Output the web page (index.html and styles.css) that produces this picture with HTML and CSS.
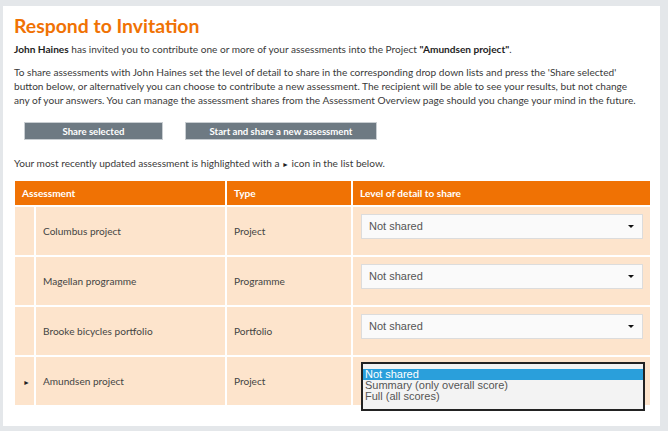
FILE: index.html
```html
<!DOCTYPE html>
<html lang="en">
  <head>
    <meta charset="UTF-8" />
    <title>Respond to Invitation</title>
    <link rel="stylesheet" href="styles.css">
  </head>
  <body>
    <div class="panel">
      <h1 class="title">Respond to Invitation</h1>
      <p class="intro">
        <b>John Haines</b> has invited you to contribute one or more of your assessments into the Project <b>"Amundsen project"</b>.
      </p>
      <p class="intro intro-long">
        To share assessments with John Haines set the level of detail to share in the corresponding drop down lists and press the 'Share selected'<br>
        button below, or alternatively you can choose to contribute a new assessment. The recipient will be able to see your results, but not change<br>
        any of your answers. You can manage the assessment shares from the Assessment Overview page should you change your mind in the future.
      </p>

      <div class="actions">
        <button class="btn btn-share">Share selected</button>
        <button class="btn btn-new">Start and share a new assessment</button>
      </div>

      <p class="intro">Your most recently updated assessment is highlighted with a <span class="mark">&#9658;</span> icon in the list below.</p>

      <table class="shares">
        <thead>
          <tr>
            <th colspan="2">Assessment</th>
            <th class="col-type">Type</th>
            <th class="col-level">Level of detail to share</th>
          </tr>
        </thead>
        <tbody>
          <tr>
            <td class="col-mark"></td>
            <td class="col-name">Columbus project</td>
            <td>Project</td>
            <td class="col-level">
              <div class="select">Not shared<span class="caret"></span></div>
            </td>
          </tr>
          <tr>
            <td class="col-mark"></td>
            <td class="col-name">Magellan programme</td>
            <td>Programme</td>
            <td class="col-level">
              <div class="select">Not shared<span class="caret"></span></div>
            </td>
          </tr>
          <tr>
            <td class="col-mark"></td>
            <td class="col-name">Brooke bicycles portfolio</td>
            <td>Portfolio</td>
            <td class="col-level">
              <div class="select">Not shared<span class="caret"></span></div>
            </td>
          </tr>
          <tr>
            <td class="col-mark"><span class="mark">&#9658;</span></td>
            <td class="col-name">Amundsen project</td>
            <td>Project</td>
            <td class="col-level">
              <div class="select">Not shared<span class="caret"></span></div>
              <ul class="dropdown">
                <li class="selected">Not shared</li>
                <li>Summary (only overall score)</li>
                <li>Full (all scores)</li>
              </ul>
            </td>
          </tr>
        </tbody>
      </table>
    </div>
  </body>
</html>
```

FILE: styles.css
```css
/* Global Styles */
* {
  margin: 0;
  padding: 0;
  box-sizing: border-box;
}

body {
  background-color: #e4e7ea;
  font-family: "Lato", sans-serif;
  font-size: 10.1px;
  color: #3a3a3a;
}

/* Panel */
.panel {
  width: 657px;
  height: 420px;
  margin: 6px 0 0 3px;
  padding: 8px 10px 0 11px;
  background-color: #fff;
}

.title {
  font-size: 19.4px;
  line-height: 24px;
  font-weight: 700;
  color: #f07204;
}

.intro {
  line-height: 14px;
  margin-top: 4px;
  margin-bottom: 9px;
  white-space: nowrap;
}

.intro-long {
  margin-top: 0;
}

.intro b {
  color: #1e1e1e;
}

.mark {
  font-size: 7px;
  color: #222;
}

/* Buttons */
.actions {
  display: flex;
  gap: 22px;
  margin: 15px 0 16px 10px;
}

.btn {
  height: 18px;
  border: 1px solid #c9ced2;
  background-color: #6e7a83;
  color: #fff;
  font-family: "Lato", sans-serif;
  font-size: 9.6px;
  font-weight: 700;
}

.btn-share {
  width: 139px;
}

.btn-new {
  width: 192px;
}

/* Table */
.shares {
  width: 639px;
  margin: -1px 0 0 -1px;
  border-spacing: 2px;
}

.shares th {
  height: 24px;
  padding: 0 7px;
  background-color: #f07204;
  color: #fff;
  text-align: left;
  font-weight: 700;
}

.shares td {
  height: 48px;
  padding: 0 7px;
  background-color: #fde4cc;
  color: #444;
}

.shares .col-mark {
  width: 19px;
  padding: 0 0 0 8px;
}

.shares .col-name {
  width: 189px;
}

.shares th.col-type {
  width: 124px;
}

.shares td.col-level {
  position: relative;
  vertical-align: top;
  padding: 7px 7px 0 8px;
}

.select {
  position: relative;
  height: 25px;
  padding: 0 7px;
  background-color: #fafafa;
  border: 1px solid #dcdcdc;
  font-family: "Liberation Sans", sans-serif;
  font-size: 11px;
  line-height: 22px;
  color: #555;
}

.caret {
  position: absolute;
  right: 8px;
  top: 10px;
  border-left: 3px solid transparent;
  border-right: 3px solid transparent;
  border-top: 3px solid #111;
}

/* Open dropdown list */
.dropdown {
  position: absolute;
  top: 5px;
  left: 8px;
  width: 284px;
  height: 49px;
  padding-top: 5px;
  list-style: none;
  background-color: #f3f3f3;
  border: 2px solid #222;
  font-family: "Liberation Sans", sans-serif;
  font-size: 11px;
  line-height: 11px;
  color: #555;
}

.dropdown li {
  padding-left: 2px;
}

.dropdown .selected {
  background-color: #2a9fdb;
  color: #fff;
}
```
